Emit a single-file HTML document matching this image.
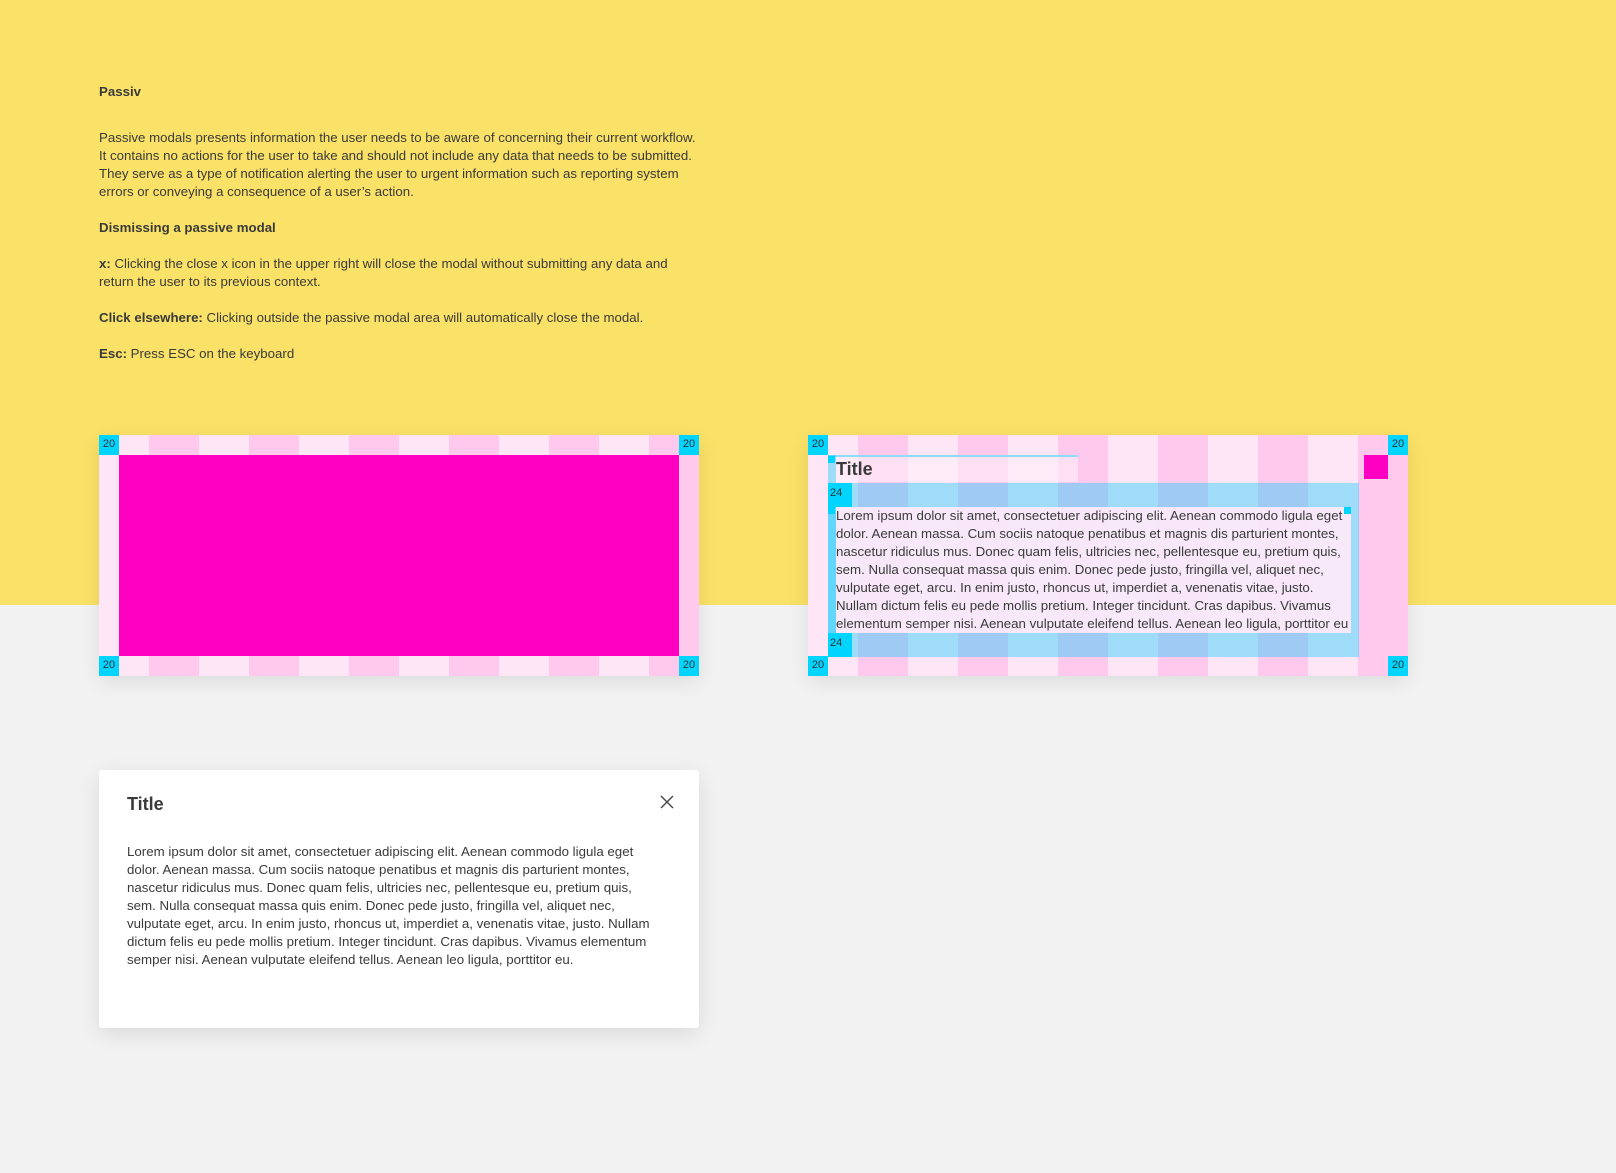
<!DOCTYPE html>
<html><head><meta charset="utf-8"><style>
*{margin:0;padding:0;box-sizing:border-box}
body{width:1616px;height:1173px;background:#f2f2f2;position:relative;overflow:hidden;font-family:"Liberation Sans",sans-serif;color:#333}
.yel{position:absolute;left:0;top:0;width:1616px;height:605px;background:#fae167}
.t{position:absolute;left:99px;font-size:13.25px;line-height:18px;white-space:nowrap;color:#3a3a3a}
.b{font-weight:bold}
.card{position:absolute;width:600px;height:241px;background:repeating-linear-gradient(to right,#ffe6f7 0 50px,#ffc9ee 50px 100px);box-shadow:0 6px 20px rgba(0,0,0,.09)}
.c{position:absolute;width:20px;height:20px;background:#00d4ff;font-size:11px;line-height:18px;text-align:center;color:#333}
.body{font-size:13.3px;line-height:18px;white-space:nowrap;color:#3a3a3a}
</style></head><body>
<div class="yel"></div>
<div class="t b" style="top:83px">Passiv</div>
<div class="t" style="top:129px">Passive modals presents information the user needs to be aware of concerning their current workflow.<br>It contains no actions for the user to take and should not include any data that needs to be submitted.<br>They serve as a type of notification alerting the user to urgent information such as reporting system<br>errors or conveying a consequence of a user’s action.</div>
<div class="t b" style="top:219px">Dismissing a passive modal</div>
<div class="t" style="top:255px"><b>x:</b> Clicking the close x icon in the upper right will close the modal without submitting any data and<br>return the user to its previous context.</div>
<div class="t" style="top:309px"><b>Click elsewhere:</b> Clicking outside the passive modal area will automatically close the modal.</div>
<div class="t" style="top:345px"><b>Esc:</b> Press ESC on the keyboard</div>

<div class="card" style="left:99px;top:435px">
 <div style="position:absolute;left:20px;top:20px;width:560px;height:201px;background:#ff00c3"></div>
 <div class="c" style="left:0;top:0">20</div><div class="c" style="right:0;top:0">20</div>
 <div class="c" style="left:0;bottom:0">20</div><div class="c" style="right:0;bottom:0">20</div>
</div>

<div class="card" style="left:808px;top:435px">
 <div style="position:absolute;left:20px;top:20px;width:250px;height:2px;background:#8fdcf8"></div>
 <div style="position:absolute;left:20px;top:20px;width:8px;height:202px;background:rgba(0,205,255,.38)"></div>
 <div style="position:absolute;left:28px;top:22px;width:242px;height:25px;background:rgba(255,240,250,.55)"></div>
 <div style="position:absolute;left:20px;top:48px;width:531px;height:174px;background:rgba(0,205,255,.38)"></div>
 <div style="position:absolute;left:28px;top:72px;width:515px;height:126px;background:#ffe9f8;opacity:.92"></div>
 <div style="position:absolute;left:556px;top:20px;width:24px;height:24px;background:#ff00c3"></div>
 <div style="position:absolute;left:20px;top:21px;width:7px;height:7px;background:#00d4ff"></div>
 <div style="position:absolute;left:20px;top:72px;width:7px;height:7px;background:#00d4ff"></div>
 <div style="position:absolute;left:536px;top:72px;width:7px;height:7px;background:#00d4ff"></div>
 <div style="position:absolute;left:28px;top:23px;font-size:18px;font-weight:bold;color:#3a3a3a;line-height:22px">Title</div>
 <div class="c" style="left:20px;top:48px;width:24px;height:24px;line-height:20px;text-align:left;padding-left:2px">24</div>
 <div class="c" style="left:20px;top:198px;width:24px;height:24px;line-height:20px;text-align:left;padding-left:2px">24</div>
 <div class="body" style="position:absolute;left:28px;top:72px">Lorem ipsum dolor sit amet, consectetuer adipiscing elit. Aenean commodo ligula eget<br>dolor. Aenean massa. Cum sociis natoque penatibus et magnis dis parturient montes,<br>nascetur ridiculus mus. Donec quam felis, ultricies nec, pellentesque eu, pretium quis,<br>sem. Nulla consequat massa quis enim. Donec pede justo, fringilla vel, aliquet nec,<br>vulputate eget, arcu. In enim justo, rhoncus ut, imperdiet a, venenatis vitae, justo.<br>Nullam dictum felis eu pede mollis pretium. Integer tincidunt. Cras dapibus. Vivamus<br>elementum semper nisi. Aenean vulputate eleifend tellus. Aenean leo ligula, porttitor eu</div>
 <div class="c" style="left:0;top:0">20</div><div class="c" style="right:0;top:0">20</div>
 <div class="c" style="left:0;bottom:0">20</div><div class="c" style="right:0;bottom:0">20</div>
</div>

<div style="position:absolute;left:99px;top:770px;width:600px;height:258px;background:#fff;border-radius:3px;box-shadow:0 6px 24px rgba(0,0,0,.1)">
 <div style="position:absolute;left:28px;top:23px;font-size:18px;font-weight:bold;color:#3a3a3a;line-height:22px">Title</div>
 <svg style="position:absolute;left:561px;top:25px" width="14" height="14" viewBox="0 0 14 14"><path d="M1 1L13 13M13 1L1 13" stroke="#444" stroke-width="1.4" fill="none"/></svg>
 <div class="body" style="position:absolute;left:28px;top:73px">Lorem ipsum dolor sit amet, consectetuer adipiscing elit. Aenean commodo ligula eget<br>dolor. Aenean massa. Cum sociis natoque penatibus et magnis dis parturient montes,<br>nascetur ridiculus mus. Donec quam felis, ultricies nec, pellentesque eu, pretium quis,<br>sem. Nulla consequat massa quis enim. Donec pede justo, fringilla vel, aliquet nec,<br>vulputate eget, arcu. In enim justo, rhoncus ut, imperdiet a, venenatis vitae, justo. Nullam<br>dictum felis eu pede mollis pretium. Integer tincidunt. Cras dapibus. Vivamus elementum<br>semper nisi. Aenean vulputate eleifend tellus. Aenean leo ligula, porttitor eu.</div>
</div>
</body></html>
